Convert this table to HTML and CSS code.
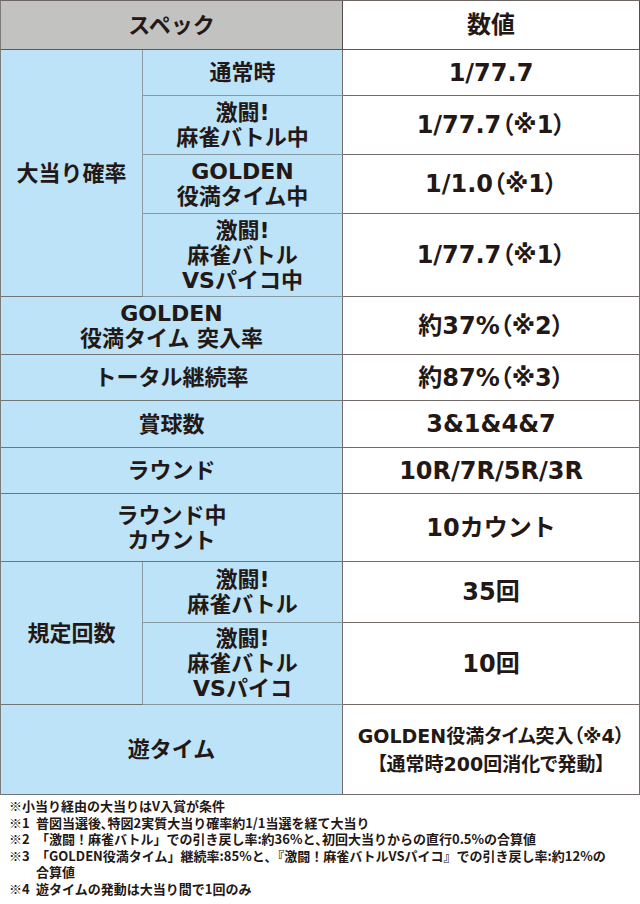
FILE: index.html
```html
<!DOCTYPE html>
<html lang="ja">
<head>
<meta charset="utf-8">
<title>スペック</title>
<link rel="stylesheet" href="styles.css">
</head>
<body>
<div class="spec">
  <div class="cell head wide">スペック</div>
  <div class="cell head val">数値</div>

  <div class="cell lab main r4">大当り確率</div>
  <div class="cell lab sub">通常時</div>
  <div class="cell val">1/77.7</div>
  <div class="cell lab sub">激闘!<br>麻雀バトル中</div>
  <div class="cell val">1/77.7<span class="note">（※1）</span></div>
  <div class="cell lab sub">GOLDEN<br>役満タイム中</div>
  <div class="cell val">1/1.0<span class="note">（※1）</span></div>
  <div class="cell lab sub">激闘!<br>麻雀バトル<br>VSパイコ中</div>
  <div class="cell val">1/77.7<span class="note">（※1）</span></div>

  <div class="cell lab wide">GOLDEN<br>役満タイム 突入率</div>
  <div class="cell val">約37%<span class="note">（※2）</span></div>
  <div class="cell lab wide">トータル継続率</div>
  <div class="cell val">約87%<span class="note">（※3）</span></div>
  <div class="cell lab wide">賞球数</div>
  <div class="cell val">3&amp;1&amp;4&amp;7</div>
  <div class="cell lab wide">ラウンド</div>
  <div class="cell val">10R/7R/5R/3R</div>
  <div class="cell lab wide">ラウンド中<br>カウント</div>
  <div class="cell val">10カウント</div>

  <div class="cell lab main r2">規定回数</div>
  <div class="cell lab sub">激闘!<br>麻雀バトル</div>
  <div class="cell val">35回</div>
  <div class="cell lab sub">激闘!<br>麻雀バトル<br>VSパイコ</div>
  <div class="cell val">10回</div>

  <div class="cell lab wide last">遊タイム</div>
  <div class="cell val small last">GOLDEN役満タイム突入（※4）<br>【通常時200回消化で発動】</div>
</div>

<div class="notes">
  <p class="line">※小当り経由の大当りはV入賞が条件</p>
  <p class="line"><span class="mark">※1</span><span class="text">普図当選後､特図2実質大当り確率約1/1当選を経て大当り</span></p>
  <p class="line"><span class="mark">※2</span><span class="text">「激闘！麻雀バトル」での引き戻し率:約36%と､初回大当りからの直行0.5%の合算値</span></p>
  <p class="line"><span class="mark">※3</span><span class="text">「GOLDEN役満タイム」継続率:85%と､『激闘！麻雀バトルVSパイコ』での引き戻し率:約12%の<br>合算値</span></p>
  <p class="line"><span class="mark">※4</span><span class="text">遊タイムの発動は大当り間で1回のみ</span></p>
</div>
</body>
</html>
```

FILE: styles.css
```css
* {
  box-sizing: border-box;
}

html, body {
  margin: 0;
  padding: 0;
  background: #ffffff;
}

body {
  width: 640px;
  color: #231815;
  font-family: "DejaVu Sans", "Noto Sans CJK JP", sans-serif;
  font-weight: 700;
}

.spec {
  display: grid;
  grid-template-columns: 142px 200px 297px;
  grid-template-rows: 49px 46px 59px 59px 83px 58px 46px 47px 46px 68px 61px 82px 90px;
  border-top: 1px solid #6d6562;
  border-left: 1px solid #7b7b7b;
  width: 640px;
}

.cell {
  display: flex;
  align-items: center;
  justify-content: center;
  text-align: center;
  border-right: 1px solid #736b68;
  border-bottom: 1px solid #736b68;
  font-size: 22px;
  line-height: 25px;
}

.head {
  background: #c2c2c1;
  font-size: 22px;
  border-bottom-color: #5e5856;
  border-right-color: #574c48;
}

.wide {
  grid-column: span 2;
}

.lab {
  background: #bce3f8;
  border-bottom-color: #727576;
}

.lab.main {
  border-right: 1px solid #8b9aa2;
}

.lab.sub {
  border-bottom-color: #8a9aa2;
}

.r4 {
  grid-row: span 4;
}

.r2 {
  grid-row: span 2;
}

.val {
  background: #ffffff;
  font-size: 24px;
  line-height: 28px;
}

.val .note {
  font-feature-settings: "palt";
}

.val.small {
  font-size: 19px;
  line-height: 28px;
  font-feature-settings: "palt";
}

.notes {
  padding: 3px 0 0 9px;
  font-family: "Noto Sans CJK JP", sans-serif;
  font-size: 13px;
  line-height: 16.5px;
}

.line {
  margin: 0;
  display: flex;
}

.mark {
  flex: 0 0 27px;
}

.text {
  flex: 1 1 auto;
}
```
